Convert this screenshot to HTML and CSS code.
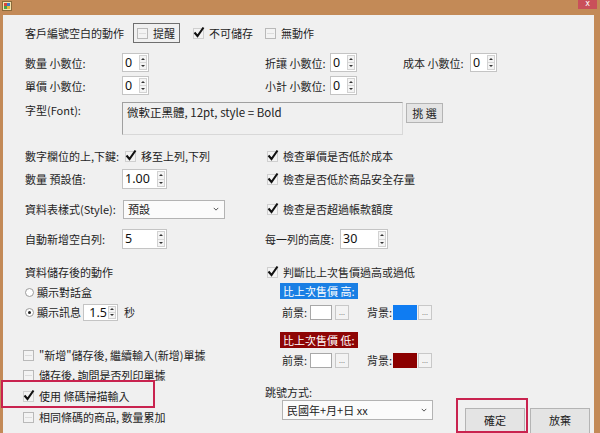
FILE: index.html
```html
<!DOCTYPE html>
<html lang="zh-Hant">
<head>
    <meta charset="UTF-8">
    <title>選項設定</title>
    <link rel="stylesheet" href="styles.css">
</head>
<body>
<div class="window">
    <div class="titlebar">
        <svg class="app-icon" width="10" height="10" viewBox="0 0 10 10">
            <rect x="0.5" y="0.5" width="9" height="9" fill="#f4e3b0" stroke="#8a6a3a"/>
            <rect x="2" y="2" width="3" height="3" fill="#d9443a"/>
            <rect x="5" y="2" width="3" height="3" fill="#3a78c9"/>
            <rect x="2" y="5" width="3" height="3" fill="#4aa04a"/>
            <rect x="5" y="5" width="3" height="3" fill="#e8b93a"/>
        </svg>
        <div class="close-btn">x</div>
    </div>

    <div class="client">
        <!-- 客戶編號 -->
        <div class="row r1">
            <span class="lab-wide">客戶編號空白的動作</span>
            <span class="toggle"><span class="box"></span>提醒</span>
            <span class="check chk-nosave"><span class="box on"><svg class="tick" viewBox="0 0 12 12"><path d="M1.5 6.5 L4.5 10 L10.5 1.5"/></svg></span>不可儲存</span>
            <span class="check"><span class="box"></span>無動作</span>
        </div>

        <div class="row r2">
            <span class="lab">數量 小數位:</span>
            <span class="ctl"><span class="spin s-small"><span class="val">0</span><span class="arrows"><i class="up"></i><i class="dn"></i></span></span></span>
            <span class="lab-r">折讓 小數位:</span>
            <span class="ctl-r"><span class="spin s-small"><span class="val">0</span><span class="arrows"><i class="up"></i><i class="dn"></i></span></span></span>
            <span class="lab-r2">成本 小數位:</span>
            <span class="spin s-small"><span class="val">0</span><span class="arrows"><i class="up"></i><i class="dn"></i></span></span>
        </div>

        <div class="row r3">
            <span class="lab">單價 小數位:</span>
            <span class="ctl"><span class="spin s-small"><span class="val">0</span><span class="arrows"><i class="up"></i><i class="dn"></i></span></span></span>
            <span class="lab-r">小計 小數位:</span>
            <span class="spin s-small"><span class="val">0</span><span class="arrows"><i class="up"></i><i class="dn"></i></span></span>
        </div>

        <div class="row r-font">
            <span class="lab font-lab">字型(Font):</span>
            <span class="font-box">微軟正黑體, 12pt, style = Bold</span>
            <span class="btn pick">挑 選</span>
        </div>

        <div class="row r5">
            <span class="lab">數字欄位的上,下鍵:</span>
            <span class="ctl"><span class="check ml3"><span class="box on"><svg class="tick" viewBox="0 0 12 12"><path d="M1.5 6.5 L4.5 10 L10.5 1.5"/></svg></span>移至上列,下列</span></span>
            <span class="check ml2"><span class="box on"><svg class="tick" viewBox="0 0 12 12"><path d="M1.5 6.5 L4.5 10 L10.5 1.5"/></svg></span>檢查單價是否低於成本</span>
        </div>

        <div class="row r6">
            <span class="lab">數量 預設值:</span>
            <span class="ctl"><span class="spin s-mid"><span class="val">1.00</span><span class="arrows"><i class="up"></i><i class="dn"></i></span></span></span>
            <span class="check ml2"><span class="box on"><svg class="tick" viewBox="0 0 12 12"><path d="M1.5 6.5 L4.5 10 L10.5 1.5"/></svg></span>檢查是否低於商品安全存量</span>
        </div>

        <div class="row r7">
            <span class="lab">資料表樣式(Style):</span>
            <span class="ctl"><span class="select sel-style">預設<svg class="chev" viewBox="0 0 8 5"><path d="M1 1 L4 4 L7 1"/></svg></span></span>
            <span class="check ml2"><span class="box on"><svg class="tick" viewBox="0 0 12 12"><path d="M1.5 6.5 L4.5 10 L10.5 1.5"/></svg></span>檢查是否超過帳款額度</span>
        </div>

        <div class="row r8">
            <span class="lab">自動新增空白列:</span>
            <span class="ctl"><span class="spin s-mid"><span class="val">5</span><span class="arrows"><i class="up"></i><i class="dn"></i></span></span></span>
            <span class="lab-height">每一列的高度:</span>
            <span class="spin s-wide"><span class="val">30</span><span class="arrows"><i class="up"></i><i class="dn"></i></span></span>
        </div>

        <div class="lower">
            <div class="col-left">
                <div class="row">資料儲存後的動作</div>
                <div class="row"><span class="radio"></span>顯示對話盒</div>
                <div class="row"><span class="radio on"></span>顯示訊息<span class="spin s-sec"><span class="val">1.5</span><span class="arrows"><i class="up"></i><i class="dn"></i></span></span><span class="sec">秒</span></div>
                <div class="row opt-first"><span class="check ml-2"><span class="box"></span>"新增"儲存後, 繼續輸入(新增)單據</span></div>
                <div class="row opt"><span class="check ml-2"><span class="box"></span>儲存後, 詢問是否列印單據</span></div>
                <div class="row opt"><span class="check ml-2"><span class="box on"><svg class="tick" viewBox="0 0 12 12"><path d="M1.5 6.5 L4.5 10 L10.5 1.5"/></svg></span>使用 條碼掃描輸入</span></div>
                <div class="row"><span class="check ml-2"><span class="box"></span>相同條碼的商品, 數量累加</span></div>
            </div>

            <div class="col-right">
                <div class="row"><span class="check ml2"><span class="box on"><svg class="tick" viewBox="0 0 12 12"><path d="M1.5 6.5 L4.5 10 L10.5 1.5"/></svg></span>判斷比上次售價過高或過低</span></div>
                <div class="tag tag-high">比上次售價 高:</div>
                <div class="color-row">
                    <span class="c-lab">前景:</span><span class="swatch"></span><span class="dots">...</span>
                    <span class="c-lab bg-lab">背景:</span><span class="swatch sw-blue"></span><span class="dots d-tight">...</span>
                </div>
                <div class="tag tag-low">比上次售價 低:</div>
                <div class="color-row row-low">
                    <span class="c-lab">前景:</span><span class="swatch"></span><span class="dots">...</span>
                    <span class="c-lab bg-lab">背景:</span><span class="swatch sw-red"></span><span class="dots d-tight">...</span>
                </div>
                <div class="jump-lab">跳號方式:</div>
                <div class="bottom-row">
                    <span class="select sel-jump">民國年+月+日 xx<svg class="chev" viewBox="0 0 8 5"><path d="M1 1 L4 4 L7 1"/></svg></span>
                    <span class="btn dlg ok">確定</span>
                    <span class="btn dlg">放棄</span>
                </div>
            </div>
        </div>
    </div>

    <div class="mark mark-scan"></div>
    <div class="mark mark-ok"></div>
</div>
</body>
</html>
```

FILE: styles.css
```css
* {
    box-sizing: border-box;
}

html, body {
    margin: 0;
    padding: 0;
}

body {
    width: 600px;
    height: 433px;
    overflow: hidden;
    background: #c38a57;
    font-family: "Noto Sans CJK TC", "Noto Sans", sans-serif;
    font-size: 11px;
    color: #1e1e1e;
}

.window {
    position: relative;
    width: 600px;
    height: 433px;
    display: flex;
    flex-direction: column;
}

.titlebar {
    height: 15px;
    flex: none;
    display: flex;
    align-items: flex-start;
    padding: 1px 3px 0 2px;
}

.close-btn {
    margin-left: auto;
    margin-top: -1px;
    width: 19px;
    height: 9px;
    background: #c9505a;
    color: #fff;
    font-family: "DejaVu Sans", sans-serif;
    font-size: 8px;
    line-height: 8px;
    text-align: center;
}

.client {
    margin-left: 3px;
    width: 591px;
    flex: 1;
    background: #f0f0f0;
    padding: 8px 0 0 22px;
    overflow: hidden;
}

.row {
    display: flex;
    align-items: center;
    height: 20px;
    white-space: nowrap;
}

.r2 { margin-top: 10px; height: 19px; }
.r3 { margin-top: 4px; height: 19px; }
.r-font { margin-top: 7px; height: 33px; align-items: flex-start; }
.r5 { margin-top: 11px; }
.r6 { margin-top: 3px; }
.r7 { margin-top: 10px; }
.r8 { margin-top: 10px; }

.lab-wide { width: 108px; }
.lab { width: 97px; }
.ctl { width: 143px; display: flex; align-items: center; }
.lab-r { width: 65px; }
.ctl-r { width: 73px; display: flex; align-items: center; }
.lab-r2 { width: 67px; }
.lab-height { width: 75px; }

.font-lab { line-height: 16px; }

/* checkbox */
.check {
    display: inline-flex;
    align-items: center;
}

.box {
    position: relative;
    width: 11px;
    height: 11px;
    border: 1px solid #b9b9b9;
    background: #f3f3f3;
    margin-right: 5px;
    flex: none;
}

.box::after {
    content: "";
    position: absolute;
    left: 1px;
    right: 1px;
    top: 4px;
    height: 1px;
    background: #dcdcdc;
}

.box.on {
    border-color: #cfcfcf;
}

.box.on::after {
    display: none;
}

.tick {
    position: absolute;
    left: -1px;
    top: -3px;
    width: 12px;
    height: 12px;
}

.tick path {
    fill: none;
    stroke: #111;
    stroke-width: 2.1;
}

.ml2 { margin-left: 2px; }
.ml3 { margin-left: 3px; }
.ml-2 { margin-left: -2px; }

.chk-nosave {
    width: 72px;
}

.toggle {
    display: inline-flex;
    align-items: center;
    width: 47px;
    height: 20px;
    border: 1px solid #6f6f6f;
    padding-left: 3px;
    margin-right: 13px;
}

/* spin box */
.spin {
    display: inline-flex;
    height: 19px;
    border: 1px solid #c4c4c4;
    background: #fff;
    flex: none;
}

.spin .val {
    flex: 1;
    padding-left: 2px;
    font-family: "Noto Sans", sans-serif;
    font-size: 12.5px;
    line-height: 17px;
    color: #111;
}

.arrows {
    width: 8px;
    margin: 1px 1px 1px 0;
    display: flex;
    flex-direction: column;
    border: 1px solid #d2d2d2;
    background: #f4f4f4;
}

.arrows i {
    flex: 1;
    display: flex;
    align-items: center;
    justify-content: center;
}

.arrows i + i {
    border-top: 1px solid #d8d8d8;
}

.arrows i::before {
    content: "";
    border-left: 2px solid transparent;
    border-right: 2px solid transparent;
}

.arrows .up::before { border-bottom: 2px solid #333; }
.arrows .dn::before { border-top: 2px solid #333; }

.s-small { width: 27px; }
.s-mid { width: 45px; height: 20px; }
.s-wide { width: 48px; height: 20px; }
.s-sec {
    width: 35px;
    height: 17px;
    margin-left: 2px;
}

.s-sec .val {
    line-height: 15px;
    text-align: right;
    padding-right: 1px;
}

.sec { margin-left: 6px; }

/* font */
.font-box {
    width: 281px;
    height: 33px;
    border: 1px solid #a0a0a0;
    border-right-color: #d8d8d8;
    border-bottom-color: #d8d8d8;
    padding: 1px 4px;
    font-size: 11.5px;
    line-height: 16px;
    color: #222;
}

.btn {
    display: inline-flex;
    align-items: center;
    justify-content: center;
    background: #e4e4e4;
    border: 1px solid #b4b4b4;
    color: #222;
}

.pick {
    width: 37px;
    height: 20px;
    margin: 1px 0 0 3px;
}

/* select */
.select {
    display: inline-flex;
    align-items: center;
    position: relative;
    height: 19px;
    border: 1px solid #b3b3b3;
    background: #fbfbfb;
    padding-left: 4px;
    color: #222;
}

.chev {
    margin-left: auto;
    margin-right: 5px;
    width: 6px;
    height: 4px;
}

.chev path {
    fill: none;
    stroke: #444;
    stroke-width: 1.2;
}

.sel-style {
    width: 102px;
    margin-left: 1px;
}

/* lower part */
.lower {
    display: flex;
    margin-top: 13px;
}

.col-left {
    width: 240px;
}

.col-right {
    flex: 1;
}

.radio {
    position: relative;
    width: 9px;
    height: 9px;
    border: 1px solid #9c9c9c;
    border-radius: 50%;
    background: #fff;
    margin-right: 3px;
}

.radio.on::after {
    content: "";
    position: absolute;
    left: 2px;
    top: 2px;
    width: 3px;
    height: 3px;
    border-radius: 50%;
    background: #222;
}

.opt-first { margin-top: 23px; }
.opt { margin-bottom: 1px; }

.tag {
    display: inline-block;
    margin-left: 15px;
    height: 16px;
    padding: 0 3px;
    line-height: 16px;
    color: #fff;
}

.tag-high {
    margin-top: 1px;
    background: #1a7fe4;
}

.tag-low {
    margin-top: 12px;
    background: #8e0505;
}

.color-row {
    display: flex;
    align-items: center;
    height: 16px;
    margin-top: 5px;
    padding-left: 17px;
}

.row-low { margin-top: 4px; }

.c-lab { width: 28px; }
.bg-lab { width: 26px; margin-left: 18px; }

.swatch {
    width: 22px;
    height: 15px;
    border: 1px solid #a8a8a8;
    background: #fff;
}

.sw-blue {
    width: 24px;
    background: #0f7cf2;
    border-color: #0f7cf2;
}

.sw-red {
    width: 24px;
    background: #8b0000;
    border-color: #8b0000;
}

.dots {
    width: 14px;
    height: 15px;
    margin-left: 3px;
    border: 1px solid #c8c8c8;
    background: #f3f3f3;
    font-size: 7px;
    line-height: 12px;
    text-align: center;
    color: #777;
}

.d-tight { margin-left: 1px; }

.jump-lab {
    margin-top: 17px;
    height: 15px;
    line-height: 15px;
}

.bottom-row {
    display: flex;
    align-items: flex-start;
}

.sel-jump {
    width: 151px;
    height: 20px;
    margin-left: 17px;
}

.dlg {
    width: 60px;
    height: 26px;
    margin-top: 8px;
    margin-left: 5px;
    padding-bottom: 2px;
}

.dlg.ok {
    margin-left: 32px;
}

/* annotation marks */
.mark {
    position: absolute;
    border: 2px solid #c9234f;
}

.mark-scan {
    left: 1px;
    top: 380px;
    width: 154px;
    height: 28px;
}

.mark-ok {
    left: 456px;
    top: 398px;
    width: 72px;
    height: 35px;
}
```
